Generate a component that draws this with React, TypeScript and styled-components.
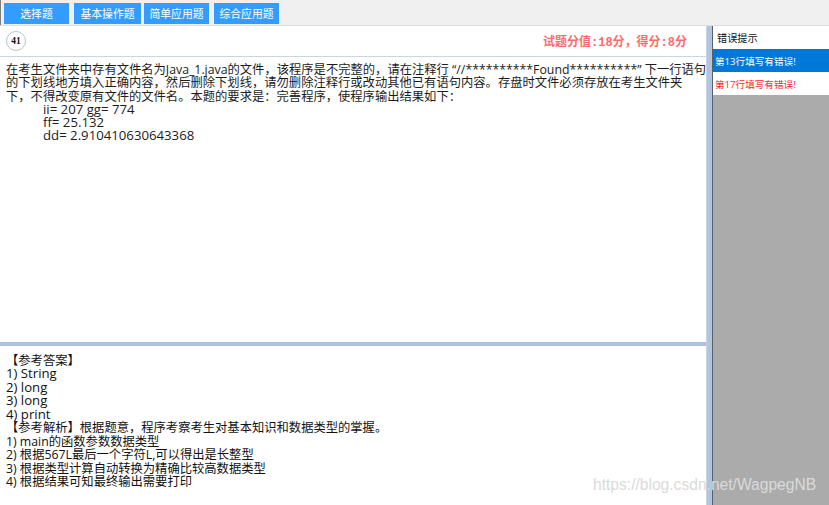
import React from "react";
import styled, { createGlobalStyle } from "styled-components";

const GlobalStyle = createGlobalStyle`
  html, body {
    margin: 0;
    padding: 0;
    width: 829px;
    height: 505px;
    overflow: hidden;
    background: #ffffff;
  }
  * { box-sizing: border-box; }
`;

const Page = styled.div`
  position: relative;
  width: 829px;
  height: 505px;
  display: flex;
  flex-direction: column;
  font-family: "Open Sans", "Noto Sans CJK SC", sans-serif;
  color: #1a1a1a;
`;

const TopBar = styled.div`
  height: 25px;
  flex: none;
  display: flex;
  align-items: flex-start;
  padding-top: 3px;
  background: #f0f0f0;
  border-left: 1px solid #7d7d7d;
`;

const TabButton = styled.button<{ $w: number; $ml: number }>`
  width: ${(p) => p.$w}px;
  height: 21px;
  margin-left: ${(p) => p.$ml}px;
  border: none;
  padding: 0;
  background: #359cff;
  color: #ffffff;
  font-family: "Noto Sans CJK SC", sans-serif;
  font-size: 10.8px;
  line-height: 21px;
  text-align: center;
  cursor: pointer;
`;

const Main = styled.div`
  flex: 1;
  display: flex;
  min-height: 0;
  border-top: 1px solid #dedede;
`;

const LeftColumn = styled.div`
  width: 706px;
  flex: none;
  display: flex;
  flex-direction: column;
  background: #ffffff;
`;

const Header = styled.div`
  height: 31px;
  flex: none;
  display: flex;
  align-items: center;
  justify-content: space-between;
  padding: 0 19px 0 6px;
  border-bottom: 1px solid #c9d6e6;
`;

const Badge = styled.div`
  width: 20px;
  height: 20px;
  border-radius: 50%;
  border: 1.5px solid #b9c3cc;
  display: flex;
  align-items: center;
  justify-content: center;
  font-family: "Liberation Serif", serif;
  font-weight: bold;
  font-size: 9.5px;
  color: #111;
  margin-top: -1px;
`;

const Score = styled.div`
  font-family: "Liberation Mono", "Noto Sans CJK SC", monospace;
  font-weight: bold;
  font-size: 12px;
  color: #ff6a6a;
  margin-top: -1px;
`;

const Question = styled.div`
  flex: 1;
  padding: 6px 6px 0 6px;
  font-size: 12.3px;
  line-height: 13.3px;
  color: #1c1c1c;
`;

const Line = styled.div<{ $indent?: number; $latin?: boolean }>`
  white-space: nowrap;
  padding-left: ${(p) => p.$indent ?? 0}px;
  font-size: ${(p) => (p.$latin ? "13.2px" : "inherit")};
`;

const HSplitter = styled.div`
  height: 4px;
  flex: none;
  background: #b3c5dc;
  border-top: 1px solid #a9bcd4;
  border-bottom: 1px solid #a9bcd4;
`;

const Answer = styled.div`
  height: 159px;
  flex: none;
  padding: 8px 7px 0 6px;
  font-size: 12.3px;
  line-height: 13.45px;
  color: #111;
`;

const VSplitter = styled.div`
  width: 7px;
  flex: none;
  background: #b3c5dc;
  border-left: 1px solid #c6d4e6;
  border-right: 1px solid #56616c;
`;

const RightPanel = styled.div`
  flex: 1;
  display: flex;
  flex-direction: column;
  background: #ababab;
`;

const PanelHeader = styled.div`
  height: 23px;
  background: #ffffff;
  padding-left: 4px;
  display: flex;
  align-items: center;
  font-family: "Noto Sans CJK SC", sans-serif;
  font-size: 10.2px;
  color: #111;
`;

const ErrorItem = styled.div<{ $active?: boolean }>`
  height: 23px;
  display: flex;
  align-items: center;
  padding-left: 2px;
  background: ${(p) => (p.$active ? "#0078d7" : "#ffffff")};
  color: ${(p) => (p.$active ? "#ffffff" : "#ff1f1f")};
  font-family: "Open Sans", "Noto Sans CJK SC", sans-serif;
  font-size: 9.6px;
`;

const Watermark = styled.div`
  position: absolute;
  left: 593px;
  top: 476px;
  font-family: "Liberation Sans", Arial, sans-serif;
  font-size: 15.6px;
  color: #dadada;
  pointer-events: none;
  white-space: nowrap;
`;

const tabs = [
  { label: "选择题", w: 65, ml: 3 },
  { label: "基本操作题", w: 67, ml: 5 },
  { label: "简单应用题", w: 65, ml: 3 },
  { label: "综合应用题", w: 65, ml: 5 },
];

const questionLines = [
  "在考生文件夹中存有文件名为Java_1.java的文件，该程序是不完整的，请在注释行 “//**********Found**********” 下一行语句",
  "的下划线地方填入正确内容，然后删除下划线，请勿删除注释行或改动其他已有语句内容。存盘时文件必须存放在考生文件夹",
  "下，不得改变原有文件的文件名。本题的要求是：完善程序，使程序输出结果如下：",
];

const outputLines = ["ii= 207 gg= 774", "ff= 25.132", "dd= 2.910410630643368"];

const answerLines: { text: string; latin?: boolean }[] = [
  { text: "【参考答案】" },
  { text: "1) String", latin: true },
  { text: "2) long", latin: true },
  { text: "3) long", latin: true },
  { text: "4) print", latin: true },
  { text: "【参考解析】根据题意，程序考察考生对基本知识和数据类型的掌握。" },
  { text: "1) main的函数参数数据类型" },
  { text: "2) 根据567L最后一个字符L,可以得出是长整型" },
  { text: "3) 根据类型计算自动转换为精确比较高数据类型" },
  { text: "4) 根据结果可知最终输出需要打印" },
];

export default function App() {
  return (
    <>
      <GlobalStyle />
      <Page>
        <TopBar>
          {tabs.map((t) => (
            <TabButton key={t.label} $w={t.w} $ml={t.ml}>
              {t.label}
            </TabButton>
          ))}
        </TopBar>
        <Main>
          <LeftColumn>
            <Header>
              <Badge>41</Badge>
              <Score>试题分值:18分，得分:8分</Score>
            </Header>
            <Question>
              {questionLines.map((l, i) => (
                <Line key={i}>{l}</Line>
              ))}
              {outputLines.map((l, i) => (
                <Line key={"o" + i} $indent={37} $latin>
                  {l}
                </Line>
              ))}
            </Question>
            <HSplitter />
            <Answer>
              {answerLines.map((l, i) => (
                <Line key={i} $latin={l.latin}>
                  {l.text}
                </Line>
              ))}
            </Answer>
          </LeftColumn>
          <VSplitter />
          <RightPanel>
            <PanelHeader>错误提示</PanelHeader>
            <ErrorItem $active>第13行填写有错误!</ErrorItem>
            <ErrorItem>第17行填写有错误!</ErrorItem>
          </RightPanel>
        </Main>
        <Watermark>https://blog.csdn.net/WagpegNB</Watermark>
      </Page>
    </>
  );
}
